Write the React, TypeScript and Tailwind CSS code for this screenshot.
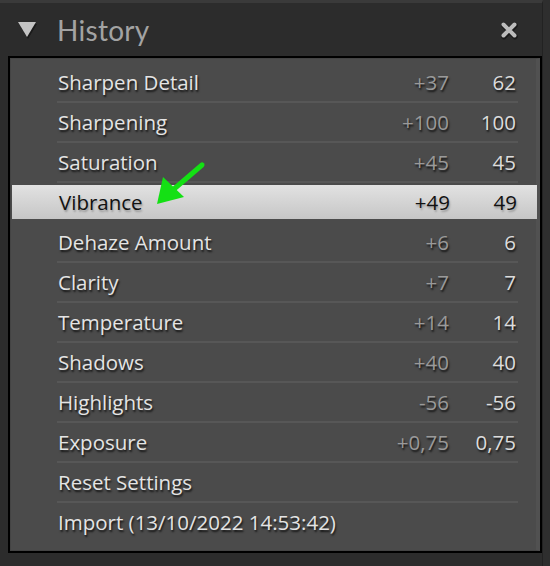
import React from "react";

const rows: { name: string; delta?: string; value?: string; selected?: boolean }[] = [
  { name: "Sharpen Detail", delta: "+37", value: "62" },
  { name: "Sharpening", delta: "+100", value: "100" },
  { name: "Saturation", delta: "+45", value: "45" },
  { name: "Vibrance", delta: "+49", value: "49", selected: true },
  { name: "Dehaze Amount", delta: "+6", value: "6" },
  { name: "Clarity", delta: "+7", value: "7" },
  { name: "Temperature", delta: "+14", value: "14" },
  { name: "Shadows", delta: "+40", value: "40" },
  { name: "Highlights", delta: "-56", value: "-56" },
  { name: "Exposure", delta: "+0,75", value: "0,75" },
  { name: "Reset Settings" },
  { name: "Import (13/10/2022 14:53:42)" },
];

export default function App() {
  return (
    <div
      className="w-[550px] h-[566px] bg-[#2e2e2e] flex overflow-hidden"
      style={{ fontFamily: "'Open Sans', Lato, sans-serif" }}
    >
      <div className="w-[543px] h-full flex flex-col bg-[#2c2c2c] border-r border-[#222] border-t-[3px] border-t-[#3a3a3a]">
        <div className="h-[53px] flex items-center pl-[17px] pr-[22px]">
          <svg width="20" height="18" viewBox="0 0 20 18" className="mt-[1px]">
            <polygon points="1,2 19,2 10,17" fill="#1a1a1a" transform="translate(1,1)" />
            <polygon points="1,1 19,1 10,16" fill="#c4c4c4" />
          </svg>
          <div
            className="ml-[20px] text-[28px] leading-none text-[#a3a3a3] tracking-[0.3px]"
            style={{ fontFamily: "Lato, sans-serif" }}
          >
            History
          </div>
          <div className="flex-1" />
          <svg width="22" height="20" viewBox="0 0 22 20">
            <path d="M5.5 4.5 L16.5 15.5 M16.5 4.5 L5.5 15.5" stroke="#1a1a1a" strokeWidth="5.5" strokeLinecap="round" transform="translate(0.5,1)" />
            <path d="M5.5 4.5 L16.5 15.5 M16.5 4.5 L5.5 15.5" stroke="#bcbcbc" strokeWidth="4" strokeLinecap="round" />
          </svg>
        </div>
        <div className="ml-[8px] mr-[0px] h-[497px] border-2 border-black bg-[#4b4b4b] flex flex-col">
          <div className="flex-1 flex flex-col pt-[4px] border border-[#444] border-r-[4px] border-r-[#515151]">
            {rows.map((r, i) => (
              <div key={i} className="h-[40px] relative flex flex-col">
                {r.selected ? (
                  <div
                    className="mt-[2px] ml-[1px] mr-[-1px] h-[34px] flex items-center pl-[47px] pr-[20px] bg-gradient-to-b from-[#e2e2e2] to-[#c6c6c6] text-[#111] text-[20.5px]"
                    style={{ textShadow: "1px 2px 2px rgba(0,0,0,0.25)" }}
                  >
                    <span className="flex-1">{r.name}</span>
                    <span className="w-[80px] text-right">{r.delta}</span>
                    <span className="w-[67px] text-right">{r.value}</span>
                  </div>
                ) : (
                  <div
                    className="h-[38px] flex items-center pl-[47px] pr-[20px] text-[20.5px]"
                    style={{ textShadow: "1px 2px 2px rgba(0,0,0,0.75)" }}
                  >
                    <span className="flex-1 text-[#e4e4e4]">{r.name}</span>
                    {r.delta && <span className="w-[80px] text-right text-[#9a9a9a]">{r.delta}</span>}
                    {r.value && <span className="w-[67px] text-right text-[#dcdcdc]">{r.value}</span>}
                  </div>
                )}
                {i < rows.length - 1 && !r.selected && (
                  <div className="absolute left-[46px] right-[18px] bottom-0 h-[2px] bg-[#575757]" />
                )}
              </div>
            ))}
          </div>
        </div>
      </div>
      <svg className="absolute left-0 top-0 pointer-events-none" width="550" height="566">
        <line x1="202" y1="165" x2="174" y2="189" stroke="#14e014" strokeWidth="5" strokeLinecap="round" />
        <polygon points="157,204 163,177 184,197" fill="#14e014" />
      </svg>
    </div>
  );
}
